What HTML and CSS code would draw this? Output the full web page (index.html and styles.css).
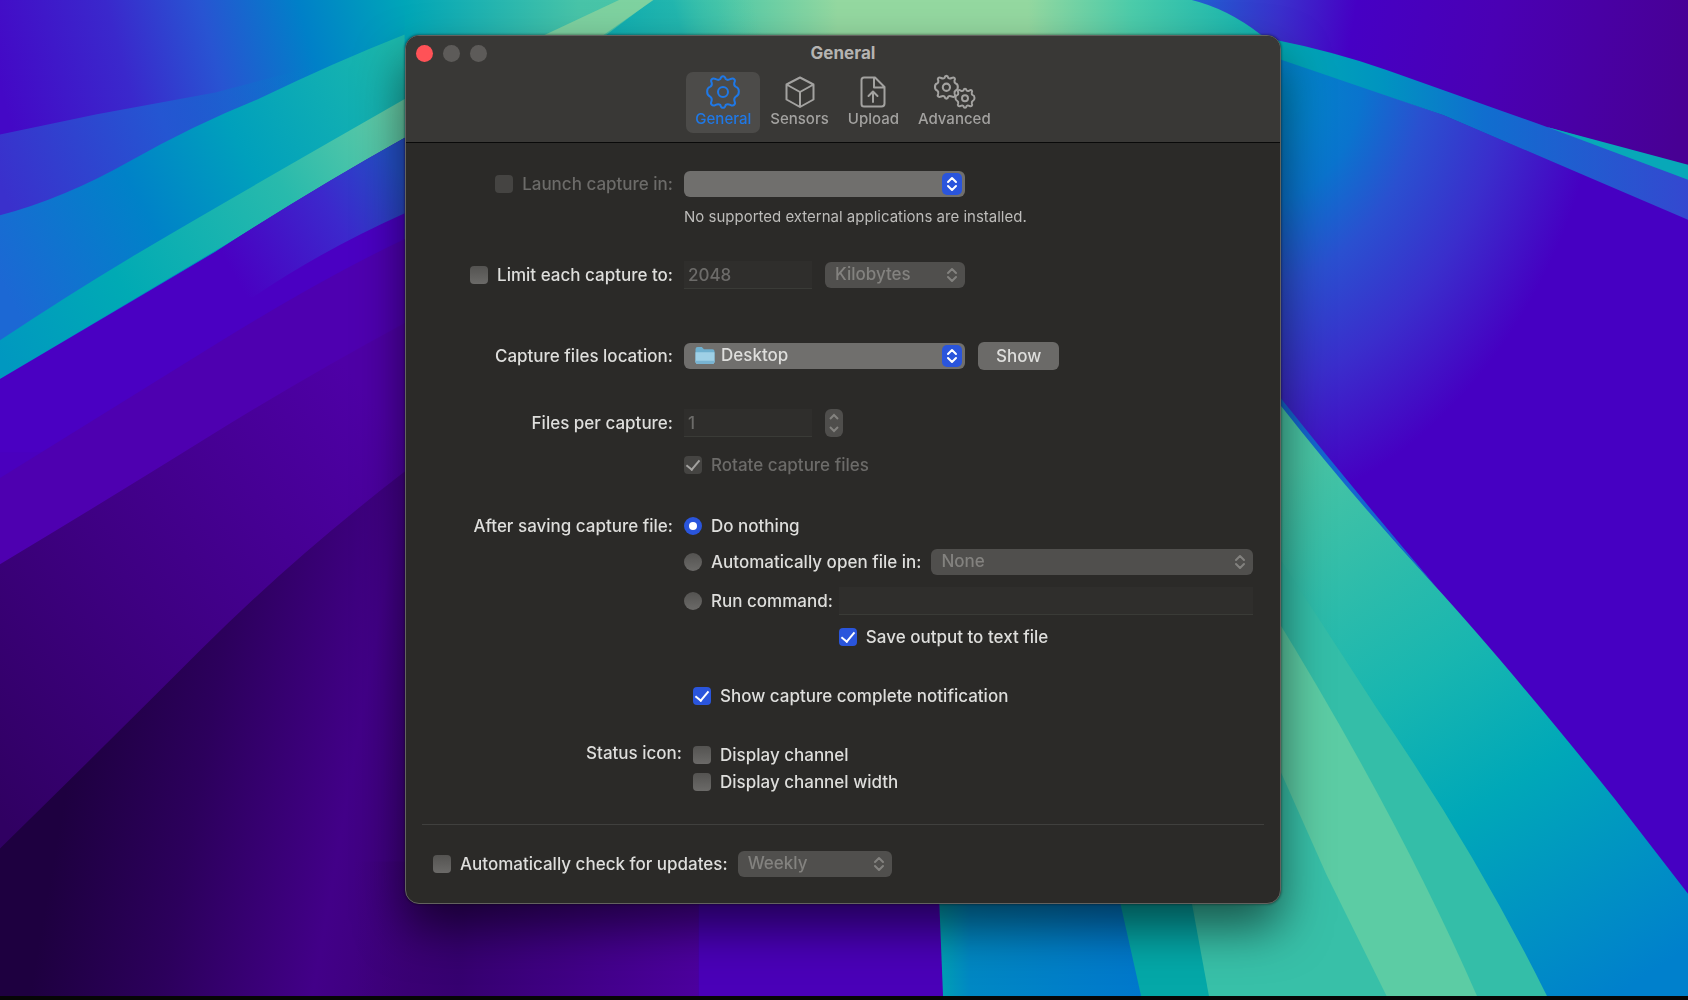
FILE: index.html
```html
<!DOCTYPE html>
<html lang="en">
<head>
<meta charset="utf-8">
<meta name="viewport" content="width=device-width, initial-scale=1">
<title>General</title>
<link rel="stylesheet" href="styles.css">
</head>
<body>
<svg class="wallpaper" viewBox="0 0 1568 925" preserveAspectRatio="none" aria-hidden="true">
  <defs>
    <linearGradient id="sky" gradientUnits="userSpaceOnUse" x1="0" y1="80" x2="370" y2="-20">
      <stop offset="0" stop-color="#4408c6"/><stop offset=".3" stop-color="#3a28cc"/><stop offset=".52" stop-color="#2854d2"/><stop offset=".75" stop-color="#0080c8"/><stop offset="1" stop-color="#00a6b8"/>
    </linearGradient>
    <linearGradient id="blue1" gradientUnits="userSpaceOnUse" x1="0" y1="170" x2="300" y2="50">
      <stop offset="0" stop-color="#3a30cc"/><stop offset=".5" stop-color="#2456d2"/><stop offset="1" stop-color="#0084c8" stop-opacity="0"/>
    </linearGradient>
    <linearGradient id="blue2" gradientUnits="userSpaceOnUse" x1="0" y1="260" x2="376" y2="60">
      <stop offset="0" stop-color="#1c68d4"/><stop offset=".35" stop-color="#0082c8"/><stop offset=".6" stop-color="#00a0bc"/><stop offset="1" stop-color="#1cb8ac"/>
    </linearGradient>
    <linearGradient id="teal1" gradientUnits="userSpaceOnUse" x1="0" y1="330" x2="376" y2="110">
      <stop offset="0" stop-color="#0098c0"/><stop offset=".3" stop-color="#00aab4"/><stop offset=".7" stop-color="#28baac"/><stop offset="1" stop-color="#66cca6"/>
    </linearGradient>
    <linearGradient id="top" gradientUnits="userSpaceOnUse" x1="376" y1="0" x2="1180" y2="0">
      <stop offset="0" stop-color="#00a6b8"/><stop offset=".2" stop-color="#48c4a8"/><stop offset=".36" stop-color="#4cc8a8"/><stop offset=".5" stop-color="#94d8a0"/><stop offset=".72" stop-color="#94d8a0"/><stop offset=".84" stop-color="#4cccaa"/><stop offset="1" stop-color="#10b2b0"/>
    </linearGradient>
    <linearGradient id="lagoon" gradientUnits="userSpaceOnUse" x1="560" y1="40" x2="700" y2="0">
      <stop offset="0" stop-color="#0cacb2"/><stop offset=".5" stop-color="#18b2b0" stop-opacity=".8"/><stop offset="1" stop-color="#4cc8a8" stop-opacity="0"/>
    </linearGradient>
    <linearGradient id="topright" gradientUnits="userSpaceOnUse" x1="1110" y1="0" x2="1568" y2="80">
      <stop offset="0" stop-color="#2060d0"/><stop offset=".17" stop-color="#3a30cc"/><stop offset=".32" stop-color="#4600c4"/><stop offset=".6" stop-color="#4a00b4"/><stop offset="1" stop-color="#480094"/>
    </linearGradient>
    <linearGradient id="band" gradientUnits="userSpaceOnUse" x1="1190" y1="0" x2="1568" y2="0">
      <stop offset="0" stop-color="#00a8b4"/><stop offset=".25" stop-color="#0094c0"/><stop offset=".5" stop-color="#106ecf"/><stop offset="1" stop-color="#3448d0"/>
    </linearGradient>
    <radialGradient id="glow" gradientUnits="userSpaceOnUse" cx="0" cy="0" r="1" gradientTransform="translate(1190 90) rotate(18) scale(290 400)">
      <stop offset="0" stop-color="#0088c8"/><stop offset=".25" stop-color="#0a74ce"/><stop offset=".45" stop-color="#2a50d0"/><stop offset=".7" stop-color="#3a2ecc"/><stop offset="1" stop-color="#4600c2"/>
    </radialGradient>
    <linearGradient id="tealR" gradientUnits="userSpaceOnUse" x1="1190" y1="440" x2="1500" y2="925">
      <stop offset="0" stop-color="#48c4a4"/><stop offset=".4" stop-color="#18b6b0"/><stop offset=".62" stop-color="#00a8b8"/><stop offset="1" stop-color="#0080cc"/>
    </linearGradient>
    <linearGradient id="strip" gradientUnits="userSpaceOnUse" x1="220" y1="260" x2="376" y2="170">
      <stop offset="0" stop-color="#4a00c2"/><stop offset=".6" stop-color="#3c28cc"/><stop offset="1" stop-color="#2450c8"/>
    </linearGradient>
    <linearGradient id="violet" gradientUnits="userSpaceOnUse" x1="0" y1="760" x2="400" y2="440">
      <stop offset="0" stop-color="#300062"/><stop offset=".45" stop-color="#3e0082"/><stop offset="1" stop-color="#4e00a6"/>
    </linearGradient>
    <linearGradient id="dark" gradientUnits="userSpaceOnUse" x1="60" y1="740" x2="400" y2="800">
      <stop offset="0" stop-color="#1e0040"/><stop offset=".35" stop-color="#2c005c"/><stop offset=".75" stop-color="#420088"/><stop offset="1" stop-color="#3c0078"/>
    </linearGradient>
    <linearGradient id="floor" gradientUnits="userSpaceOnUse" x1="330" y1="0" x2="649" y2="0">
      <stop offset="0" stop-color="#3a0070" stop-opacity="0"/><stop offset=".3" stop-color="#360070"/><stop offset="1" stop-color="#4c009e"/>
    </linearGradient>
    <linearGradient id="blueB" gradientUnits="userSpaceOnUse" x1="873" y1="0" x2="1060" y2="0">
      <stop offset="0" stop-color="#00a0b4"/><stop offset=".15" stop-color="#0088c4"/><stop offset="1" stop-color="#0078cc"/>
    </linearGradient>
  </defs>
  <rect width="1568" height="925" fill="#4a00be"/>
  <path fill="url(#sky)" d="M0 0H378V200H0z"/>
  <path fill="url(#blue1)" d="M0 125L90 106 200 86 290 62 376 40V220H0z"/>
  <path fill="url(#blue2)" d="M0 200Q60 184 120 150T240 92Q310 58 376 32V260L0 352z"/>
  <path fill="url(#teal1)" d="M0 316Q60 276 120 240T376 92V128L0 352z"/>
  <path fill="#4a00c2" d="M0 352L200 234Q290 176 376 128V420H0z"/>
  <path fill="url(#strip)" d="M130 276L200 234Q290 176 376 128V198Q300 232 235 276z"/>
  <path fill="#4e00b0" d="M0 444Q100 382 200 320T376 222V420L0 560z"/>
  <path fill="url(#violet)" d="M0 524Q100 464 190 408T376 300V500L0 800z"/>
  <path fill="url(#dark)" d="M0 788Q100 690 186 604T376 438H649V925H0z"/>
  <path fill="url(#floor)" d="M330 800H649V925H330z"/>
  <path fill="#4a00b8" d="M649 800H876V925H649z"/>
  <path fill="url(#top)" d="M376 0H1200V60H376z"/>
  <path fill="url(#lagoon)" d="M606 0H720V50H540z"/>
  <path fill="#8cd49e" d="M575 0H607L550 40H490z" opacity=".8"/>
  <path fill="url(#topright)" d="M1107 0Q1140 8 1171 32L1190 40Q1240 48 1288 65T1437 118L1568 155V0z"/>
  <path fill="url(#glow)" d="M1180 50L1341 107 1568 204V830L1406 628 1331 542 1190 374z"/>
  <path fill="url(#band)" d="M1180 36Q1240 48 1288 65T1437 118L1568 155V204L1341 107 1180 52z"/>
  <path fill="#08a8b8" d="M1437 118L1568 153V167z"/>
  <path fill="url(#tealR)" d="M1180 362L1190 374Q1260 464 1331 542T1500 742L1568 830V925H1180z"/>
  <path fill="#1466d0" d="M1190 370Q1260 458 1335 546Q1260 466 1190 377z"/>
  <path fill="#34bea8" d="M1180 505L1279 658Q1370 790 1437 925H1090V820z"/>
  <path fill="#5ccca4" d="M1180 565Q1300 760 1372 925H1120z"/>
  <path fill="#38c0a8" d="M1180 695L1232 812 1288 925H1110V820z"/>
  <path fill="#04a8a8" d="M1020 800H1100L1123 925H1050z"/>
  <path fill="url(#blueB)" d="M871 800H1032L1060 925H876z"/>
</svg>

<main class="window">
  <header class="titlebar">
    <div class="lights">
      <button type="button" class="light light-close" aria-label="Close"></button>
      <button type="button" class="light" aria-label="Minimize"></button>
      <button type="button" class="light" aria-label="Zoom"></button>
    </div>
    <h1 class="title">General</h1>
    <nav class="tabs">
      <button type="button" class="tab tab-active" aria-current="page">
        <svg class="tab-icon" viewBox="0 0 40 34"><use href="#gear"/></svg>
        General
      </button>
      <button type="button" class="tab">
        <svg class="tab-icon" viewBox="0 0 40 34"><path d="M20 2.500L33.500 9.500V24.500L20 32 6.500 24.500V9.500zM6.500 9.500L20 17 33.500 9.500M20 17V32"/></svg>
        Sensors
      </button>
      <button type="button" class="tab">
        <svg class="tab-icon" viewBox="0 0 40 34"><path d="M11 2.500H22L31.500 12V28.500Q31.500 31.500 28.500 31.500H11Q8.500 31.500 8.500 29V5Q8.500 2.500 11 2.500zM21 2.500V12.500H31.500M20 27V17M15.500 21L20 16.500 24.500 21"/></svg>
        Upload
      </button>
      <button type="button" class="tab">
        <svg class="tab-icon" viewBox="0 0 40 34">
          <g transform="translate(-2 0) scale(.72)" stroke-width="2.900"><use href="#gear"/></g>
          <g transform="translate(19 13) scale(.6)" stroke-width="3.300"><use href="#gear"/></g>
        </svg>
        Advanced
      </button>
    </nav>
  </header>

  <form class="form">
    <div class="row">
      <label class="check check-end dim"><input type="checkbox" class="box" disabled>Launch capture in:</label>
      <span class="popup popup-wide popup-on">
        <select aria-label="Application"><option></option></select>
        <svg class="arrows" viewBox="0 0 20 22"><path d="M6 9L10 5 14 9M6 13L10 17 14 13"/></svg>
      </span>
    </div>
    <div class="row hint-row"><p class="hint">No supported external applications are installed.</p></div>

    <div class="row row-limit">
      <label class="check check-end"><input type="checkbox" class="box">Limit each capture to:</label>
      <div class="controls">
        <input class="field field-short" type="text" value="2048" aria-label="Capture limit" disabled>
        <span class="popup popup-unit">
          <select aria-label="Unit" disabled><option>Kilobytes</option></select>
          <svg class="arrows" viewBox="0 0 20 22"><path d="M6 9L10 5 14 9M6 13L10 17 14 13"/></svg>
        </span>
      </div>
    </div>

    <div class="row row-location">
      <label class="label" for="location">Capture files location:</label>
      <div class="controls">
        <span class="popup popup-wide popup-on popup-folder">
          <svg class="folder" viewBox="0 0 20 18">
            <path fill="#6fb0cf" d="M1 3Q1 1 3 1H7L9 3H17Q19 3 19 5V15Q19 17 17 17H3Q1 17 1 15z"/>
            <path fill="#9fd0e6" d="M1 6H19V15Q19 17 17 17H3Q1 17 1 15z"/>
            <path fill="#79b4d2" d="M1 14H19V15Q19 17 17 17H3Q1 17 1 15z"/>
          </svg>
          <select id="location"><option>Desktop</option></select>
          <svg class="arrows" viewBox="0 0 20 22"><path d="M6 9L10 5 14 9M6 13L10 17 14 13"/></svg>
        </span>
        <button type="button" class="push">Show</button>
      </div>
    </div>

    <div class="row row-files">
      <label class="label" for="files">Files per capture:</label>
      <div class="controls">
        <input id="files" class="field field-short" type="text" value="1" disabled>
        <button type="button" class="stepper" aria-label="Change files per capture" disabled>
          <svg viewBox="0 0 18 28"><path d="M5 10L9 6 13 10M5 18L9 22 13 18"/></svg>
        </button>
      </div>
    </div>
    <div class="row row-rotate">
      <label class="check dim"><input type="checkbox" class="box" checked disabled>Rotate capture files</label>
    </div>

    <div class="row row-after">
      <span class="label">After saving capture file:</span>
      <label class="check"><input type="radio" name="after" class="radio" checked>Do nothing</label>
    </div>
    <div class="row row-open">
      <div class="controls controls-fill">
        <label class="check"><input type="radio" name="after" class="radio">Automatically open file in:</label>
        <span class="popup popup-fill">
          <select aria-label="Open file in" disabled><option>None</option></select>
          <svg class="arrows" viewBox="0 0 20 22"><path d="M6 9L10 5 14 9M6 13L10 17 14 13"/></svg>
        </span>
      </div>
    </div>
    <div class="row row-command">
      <div class="command">
        <label class="check"><input type="radio" name="after" class="radio">Run command:</label>
        <input class="field" type="text" aria-label="Command" disabled>
        <label class="check command-output"><input type="checkbox" class="box" checked>Save output to text file</label>
      </div>
    </div>

    <div class="status">
      <div class="row row-notify">
        <label class="check"><input type="checkbox" class="box" checked>Show capture complete notification</label>
      </div>
      <div class="row">
        <span class="label">Status icon:</span>
        <div class="stack">
          <label class="check"><input type="checkbox" class="box">Display channel</label>
          <label class="check"><input type="checkbox" class="box">Display channel width</label>
        </div>
      </div>
    </div>

    <footer class="updates">
      <label class="check"><input type="checkbox" class="box">Automatically check for updates:</label>
      <span class="popup popup-week">
        <select aria-label="Update frequency" disabled><option>Weekly</option></select>
        <svg class="arrows" viewBox="0 0 20 22"><path d="M6 9L10 5 14 9M6 13L10 17 14 13"/></svg>
      </span>
    </footer>
  </form>
</main>

<svg class="symbols" aria-hidden="true">
  <symbol id="gear" viewBox="0 0 40 34" width="40" height="34" overflow="visible">
    <path d="M17.300 4.100C18.300 0.200 21.700 0.200 22.700 4.100Q24.500 5.600 27.200 4.200C30.700 2.300 33.100 4.700 31.200 8.100Q30.800 11 33 11.900C36.800 13 36.800 20 33 21.500Q30.700 23 31.400 25.900C33.100 29.300 30.700 31.700 27.300 29.800Q24.500 28.500 22.700 29.900C21.700 33.800 18.300 33.800 17.300 29.900Q15.500 28.500 12.700 29.800C9.300 31.700 6.900 29.300 8.600 25.900Q9.300 23 7 21.500C3.200 20 3.200 13 7 11.900Q9.200 11 8.800 8.100C6.900 4.700 9.300 2.300 12.800 4.200Q15.500 5.600 17.300 4.100z"/>
    <circle cx="20" cy="17" r="5"/>
  </symbol>
</svg>
</body>
</html>
```
FILE: styles.css
```css
* { box-sizing: border-box; }

body {
  margin: 0;
  min-height: 100vh;
  padding: 35px 26px 92px 24px;
  background: #4a00be;
  font-family: Inter, "Liberation Sans", sans-serif;
  font-size: 17px;
  font-weight: 450;
  line-height: 20px;
  color: #dededc;
}

button, input, select { font: inherit; color: inherit; margin: 0; }

.wallpaper {
  position: fixed;
  inset: 0;
  z-index: -1;
  width: 100%;
  height: 100%;
  border-bottom: 4px solid #060606;
}

.symbols { position: absolute; width: 0; height: 0; }

.window {
  max-width: 876px;
  margin: 0 auto;
  border: 1px solid #63625f;
  border-radius: 14px;
  background: #2b2a28;
  box-shadow: 0 24px 48px rgba(0, 0, 0, .55), 0 0 3px rgba(0, 0, 0, .6);
  overflow: hidden;
}

.titlebar {
  display: grid;
  grid-template-columns: 1fr auto 1fr;
  align-items: center;
  row-gap: 9px;
  padding: 7px 10px 9px;
  background: #393836;
  border-bottom: 1px solid #090909;
}

.lights { display: flex; gap: 10px; }

.light {
  width: 17px;
  height: 17px;
  padding: 0;
  border: 0;
  border-radius: 50%;
  background: #5d5b59;
}

.light-close { background: #ff5257; }

.title {
  margin: 0;
  font-size: 17px;
  font-weight: 700;
  line-height: 20px;
  color: #b5b4b2;
}

.tabs {
  grid-column: 1 / -1;
  display: flex;
  justify-content: center;
  gap: 1px;
}

.tab {
  display: flex;
  flex-direction: column;
  align-items: center;
  gap: 1px;
  height: 61px;
  padding: 3px 9px;
  border: 0;
  border-radius: 7px;
  background: none;
  font-size: 15px;
  font-weight: 500;
  line-height: 18px;
  color: #a3a2a0;
}

.tab-active { background: #4c4b49; color: #1f78e6; }

.tab-icon {
  width: 40px;
  height: 34px;
  overflow: visible;
  fill: none;
  stroke: currentColor;
  stroke-width: 2;
  stroke-linejoin: round;
  stroke-linecap: round;
}

.form { padding: 27px 16px 26px; }

.row {
  display: grid;
  grid-template-columns: 251px 1fr;
  column-gap: 11px;
  align-items: center;
  min-height: 28px;
  padding-right: 11px;
}

.row > :only-child { grid-column: 2; }

.label { text-align: right; }

.check {
  display: flex;
  align-items: center;
  gap: 9px;
  white-space: nowrap;
}

.check-end { justify-content: flex-end; }

.dim { color: #6c6b69; }

.box, .radio {
  appearance: none;
  flex: none;
  display: grid;
  place-items: center;
  width: 18px;
  height: 18px;
  border-radius: 4px;
  background: linear-gradient(#545351, #6b6a68);
}

.radio { border-radius: 50%; }

.box:checked, .radio:checked { background: #2a55dc; }

.box:checked::after {
  content: "";
  width: 6px;
  height: 11px;
  margin-bottom: 3px;
  border: solid #fff;
  border-width: 0 2px 2px 0;
  transform: rotate(40deg);
}

.radio:checked::after {
  content: "";
  width: 8px;
  height: 8px;
  border-radius: 50%;
  background: #fff;
}

.box:disabled { background: #454442; }
.box:disabled:checked::after { border-color: #a3a2a0; }

.controls { display: flex; align-items: center; gap: 13px; }
.controls-fill { gap: 10px; }

.popup { position: relative; display: block; height: 26px; }
.popup-wide { width: 281px; }
.popup-unit { width: 140px; }
.popup-week { width: 154px; }
.popup-fill { flex: 1; }

.popup select {
  appearance: none;
  display: block;
  width: 100%;
  height: 26px;
  padding: 0 28px 2px 10px;
  border: 0;
  border-radius: 6px;
  background: #706f6d;
}

.popup select:disabled { background: #504f4d; color: #83827f; opacity: 1; }

.popup-folder select { padding-left: 37px; }

.arrows {
  position: absolute;
  top: 2px;
  right: 3px;
  width: 20px;
  height: 22px;
  border-radius: 5px;
  fill: none;
  stroke: #83827f;
  stroke-width: 2;
  stroke-linecap: round;
  stroke-linejoin: round;
  pointer-events: none;
}

.popup-on .arrows { background: #2a55dc; stroke: #fff; }

.folder {
  position: absolute;
  top: 3px;
  left: 10px;
  width: 22px;
  height: 19px;
  pointer-events: none;
}

.field {
  height: 28px;
  min-width: 0;
  padding: 0 4px;
  border: 0;
  border-bottom: 1px solid #3a3b37;
  background: #2f2e2c;
}

.field:disabled { color: #6c6b69; }

.field-short { width: 128px; }

.push {
  height: 28px;
  padding: 0 18px;
  border: 0;
  border-radius: 6px;
  background: #6b6a68;
}

.stepper {
  width: 18px;
  height: 28px;
  padding: 0;
  border: 0;
  border-radius: 6px;
  background: #4f4e4c;
}

.stepper svg {
  display: block;
  fill: none;
  stroke: #83827f;
  stroke-width: 2;
}

.hint-row { min-height: 20px; margin-top: 9px; }
.hint { margin: 0; font-size: 15px; font-weight: 400; color: #bdbcba; }

.row-limit { margin-top: 34px; }
.row-location { margin-top: 53px; }
.row-files { margin-top: 39px; }
.row-rotate { margin-top: 14px; }
.row-after { margin-top: 33px; }
.row-open { margin-top: 8px; }
.row-command { margin-top: 11px; }

.command {
  display: grid;
  grid-template-columns: auto 1fr;
  column-gap: 6px;
  row-gap: 8px;
  align-items: center;
}

.command-output { grid-column: 2; min-height: 28px; }

.status { padding-top: 31px; }
.status .row { grid-template-columns: 260px 1fr; align-items: start; }
.status .label { line-height: 24px; }
.status .check { min-height: 27px; }
.row-notify { margin-bottom: 31px; }

.updates {
  display: flex;
  align-items: center;
  gap: 10px;
  margin-top: 29px;
  padding: 26px 11px 0;
  border-top: 1px solid #40403e;
}
```
